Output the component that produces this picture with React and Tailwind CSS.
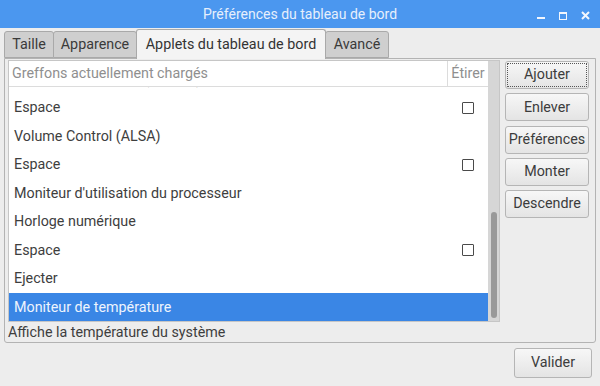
import React from 'react';

// Fenêtre "Préférences du tableau de bord" (onglet Applets)
const tabs = [
  { label: 'Taille', w: 'w-[50px]' },
  { label: 'Apparence', w: 'w-[84px]' },
  { label: 'Applets du tableau de bord', w: 'w-[190px]', active: true },
  { label: 'Avancé', w: 'w-[64px]' },
];

const rows = [
  { name: 'Gestionnaire réseau (dhcpcd)' },
  { name: 'Espace', stretch: true },
  { name: 'Volume Control (ALSA)' },
  { name: 'Espace', stretch: true },
  { name: "Moniteur d'utilisation du processeur" },
  { name: 'Horloge numérique' },
  { name: 'Espace', stretch: true },
  { name: 'Ejecter' },
  { name: 'Moniteur de température', selected: true },
];

const buttons = ['Ajouter', 'Enlever', 'Préférences', 'Monter', 'Descendre'];

const WindowControls = () => (
  <div className="absolute right-[10px] top-[11px] flex items-center gap-[14px]">
    <svg width="8" height="9" viewBox="0 0 8 9">
      <rect x="0" y="6" width="8" height="2" fill="#f2f6fd" />
    </svg>
    <svg width="8" height="8" viewBox="0 0 8 8">
      <rect x="0.5" y="0.5" width="7" height="7" fill="none" stroke="#f2f6fd" />
      <rect x="0" y="0" width="8" height="2" fill="#f2f6fd" />
    </svg>
    <svg width="9" height="9" viewBox="0 0 9 9">
      <path d="M1 1 L8 8 M8 1 L1 8" stroke="#f2f6fd" strokeWidth="2" />
    </svg>
  </div>
);

const Checkbox = () => (
  <div className="w-[12px] h-[12px] border border-[#4a4a4a] rounded-[1px] bg-white" />
);

const App = () => {
  return (
    <div
      className="w-[600px] h-[386px] bg-[#ededed] flex flex-col overflow-hidden text-[14.3px] text-[#3e3e3e]"
      style={{ fontFamily: 'Roboto, "Liberation Sans", sans-serif' }}
    >
      {/* Barre de titre */}
      <div className="relative h-[28px] bg-[#4b97ef] flex items-center justify-center shrink-0">
        <span className="text-[#e6effc] text-[14px]">Préférences du tableau de bord</span>
        <WindowControls />
      </div>

      {/* Onglets */}
      <div className="flex items-end h-[30px] pl-[4px] shrink-0 relative z-10">
        {tabs.map((tab, i) => (
          <div
            key={tab.label}
            className={
              tab.active
                ? `${tab.w} h-[30px] -ml-px -mb-px bg-[#f4f4f4] border border-b-0 border-[#a9a9a9] rounded-t-[3px] flex items-center justify-center text-[#333]`
                : `${tab.w} h-[27px] ${i > 0 ? '-ml-px' : ''} bg-[#cfcfcf] border border-[#a9a9a9] rounded-t-[3px] flex items-center justify-center text-[#3a3a3a]`
            }
          >
            {tab.label}
          </div>
        ))}
      </div>

      {/* Contenu de l'onglet */}
      <div className="mx-[4px] h-[285px] shrink-0 border border-[#b3b3b3] rounded-b-[3px] bg-[#ededed] pt-[1px] pl-[3px] pr-[6px] flex gap-[5px]">
        <div className="w-[492px] flex flex-col">
          <div className="h-[263px] border border-[#c6c6c6] bg-white flex">
            <div className="flex-1 flex flex-col min-w-0">
              <div className="h-[26px] shrink-0 flex border-b border-[#dcdcdc] text-[#8f8f8f]">
                <div className="flex-1 pl-[3px] flex items-center">Greffons actuellement chargés</div>
                <div className="w-[41px] border-l border-[#dcdcdc] flex items-center justify-center">Étirer</div>
              </div>
              <div className="flex-1 overflow-hidden">
                <div className="-mt-[22.5px]">
                  {rows.map((row, i) => (
                    <div
                      key={i}
                      className={`h-[28.5px] flex items-center pt-px ${row.selected ? 'bg-[#3a86e5] text-[#eef4fd]' : ''}`}
                    >
                      <div className="flex-1 pl-[5px] whitespace-nowrap">{row.name}</div>
                      <div className="w-[41px] flex justify-center">{row.stretch && <Checkbox />}</div>
                    </div>
                  ))}
                </div>
              </div>
            </div>
            {/* Barre de défilement */}
            <div className="w-[11px] bg-[#d6d6d6] flex flex-col justify-end items-center pb-[3px]">
              <div className="w-[6px] h-[106px] rounded-full bg-[#999999]" />
            </div>
          </div>
          <div className="flex-1 flex items-center">Affiche la température du système</div>
        </div>

        <div className="w-[84px] pt-[1px] flex flex-col gap-[4.25px]">
          {buttons.map((b, i) => (
            <button
              key={b}
              className={`h-[28px] rounded-[3px] border border-[#b5b5b5] bg-gradient-to-b from-[#f7f7f7] to-[#e4e4e4] text-[#3c3c3c] ${
                i === 0 ? 'outline-1 outline-dotted outline-[#555] -outline-offset-3' : ''
              }`}
            >
              {b}
            </button>
          ))}
        </div>
      </div>

      {/* Bas de fenêtre */}
      <div className="flex justify-end pr-[8px] pt-[5px]">
        <button className="w-[78px] h-[30px] rounded-[3px] border border-[#b5b5b5] bg-gradient-to-b from-[#f7f7f7] to-[#e4e4e4] text-[#3c3c3c]">
          Valider
        </button>
      </div>
    </div>
  );
};

export default App;
